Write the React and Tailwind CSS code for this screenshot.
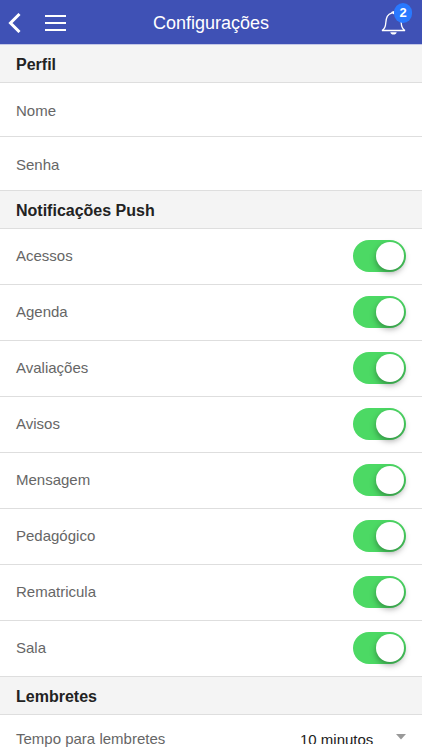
import { useState } from 'react'

const notifications = [
  'Acessos',
  'Agenda',
  'Avaliações',
  'Avisos',
  'Mensagem',
  'Pedagógico',
  'Rematricula',
  'Sala',
]

function SectionTitle({ children }) {
  return (
    <h2 className="flex h-[38px] items-center border-b border-[#dedede] bg-[#f4f4f4] px-4 pt-[3px] text-base font-bold leading-5 text-[#222]">
      {children}
    </h2>
  )
}

function ToggleRow({ label }) {
  const [on, setOn] = useState(true)

  return (
    <label className="flex h-14 items-center justify-between border-b border-[#dedede] px-4 pb-px text-[15px] text-[#666]">
      <span className="pt-px">{label}</span>
      <input
        type="checkbox"
        role="switch"
        checked={on}
        onChange={(e) => setOn(e.target.checked)}
        className="flex h-8 w-[53px] cursor-pointer appearance-none items-center rounded-full bg-gray-200 px-0.5 transition-colors before:size-7 before:rounded-full before:bg-white before:shadow-[0_3px_6px_rgba(0,0,0,0.35)] before:transition-transform checked:bg-[#4cd964] checked:before:translate-x-[21px]"
      />
    </label>
  )
}

export default function App() {
  const [time, setTime] = useState('10')

  return (
    <div className="h-screen overflow-hidden bg-white font-['Liberation_Sans',Arial,sans-serif]">
      <header className="grid h-[45px] grid-cols-[1fr_auto_1fr] items-center border-b border-[#c3c7e6] bg-[#3f51b5] px-2 pt-px text-white">
        <div className="flex items-center gap-6">
          <button aria-label="Voltar">
            <svg width="13" height="20" viewBox="0 0 13 20" fill="none" stroke="currentColor" strokeWidth="3">
              <path d="M11.5 1 2.5 10l9 9" />
            </svg>
          </button>
          <button aria-label="Menu">
            <svg width="21" height="16" viewBox="0 0 21 16" fill="currentColor">
              <path d="M0 0h21v2H0zM0 7h21v2H0zM0 14h21v2H0z" />
            </svg>
          </button>
        </div>

        <h1 className="text-lg">Configurações</h1>

        <button aria-label="Notificações" className="relative mr-2 justify-self-end">
          <svg width="25" height="24" viewBox="0 0 25 24" fill="none" stroke="currentColor" strokeWidth="1.3">
            <path d="M1 19.500c3-1.600 3.600-3.900 3.800-7.700C5.100 6.500 6.600 3.200 10.500 2.200c.3-1.700 3.700-1.700 4 0 3.900 1 5.400 4.300 5.700 9.600.2 3.800.8 6.100 3.800 7.700z" />
            <path d="M9.300 21.200h6.400c-.3 1.500-1.600 2.300-3.200 2.300s-2.900-.8-3.200-2.300z" fill="currentColor" stroke="none" />
            <circle cx="12.500" cy="1.800" r="1.400" fill="currentColor" stroke="none" />
          </svg>
          <span className="absolute -right-1.5 -top-2 flex h-5 w-[18px] items-center justify-center rounded-full bg-[#2979ff] text-[13px] font-bold leading-none">
            2
          </span>
        </button>
      </header>

      <main>
        <SectionTitle>Perfil</SectionTitle>
        {['Nome', 'Senha'].map((item) => (
          <button
            key={item}
            className="flex h-[54px] w-full items-center border-b border-[#dedede] px-4 pt-[3px] text-left text-[15px] text-[#666]"
          >
            {item}
          </button>
        ))}

        <SectionTitle>Notificações Push</SectionTitle>
        {notifications.map((label) => (
          <ToggleRow key={label} label={label} />
        ))}

        <SectionTitle>Lembretes</SectionTitle>
        <div className="flex items-start justify-between px-4 text-[15px] leading-5 text-[#666]">
          <label htmlFor="reminder" className="pt-[14px]">
            Tempo para lembretes
          </label>
          <div className="flex h-[29px] items-start overflow-hidden pt-[15px]">
            <select
              id="reminder"
              value={time}
              onChange={(e) => setTime(e.target.value)}
              className="w-24 appearance-none bg-transparent leading-5 text-[#222]"
            >
              <option value="5">5 minutos</option>
              <option value="10">10 minutos</option>
              <option value="30">30 minutos</option>
            </select>
            <svg className="mt-1" width="10" height="6" viewBox="0 0 10 6" fill="#999" aria-hidden="true">
              <path d="M0 0h10L5 5.500z" />
            </svg>
          </div>
        </div>
      </main>
    </div>
  )
}
